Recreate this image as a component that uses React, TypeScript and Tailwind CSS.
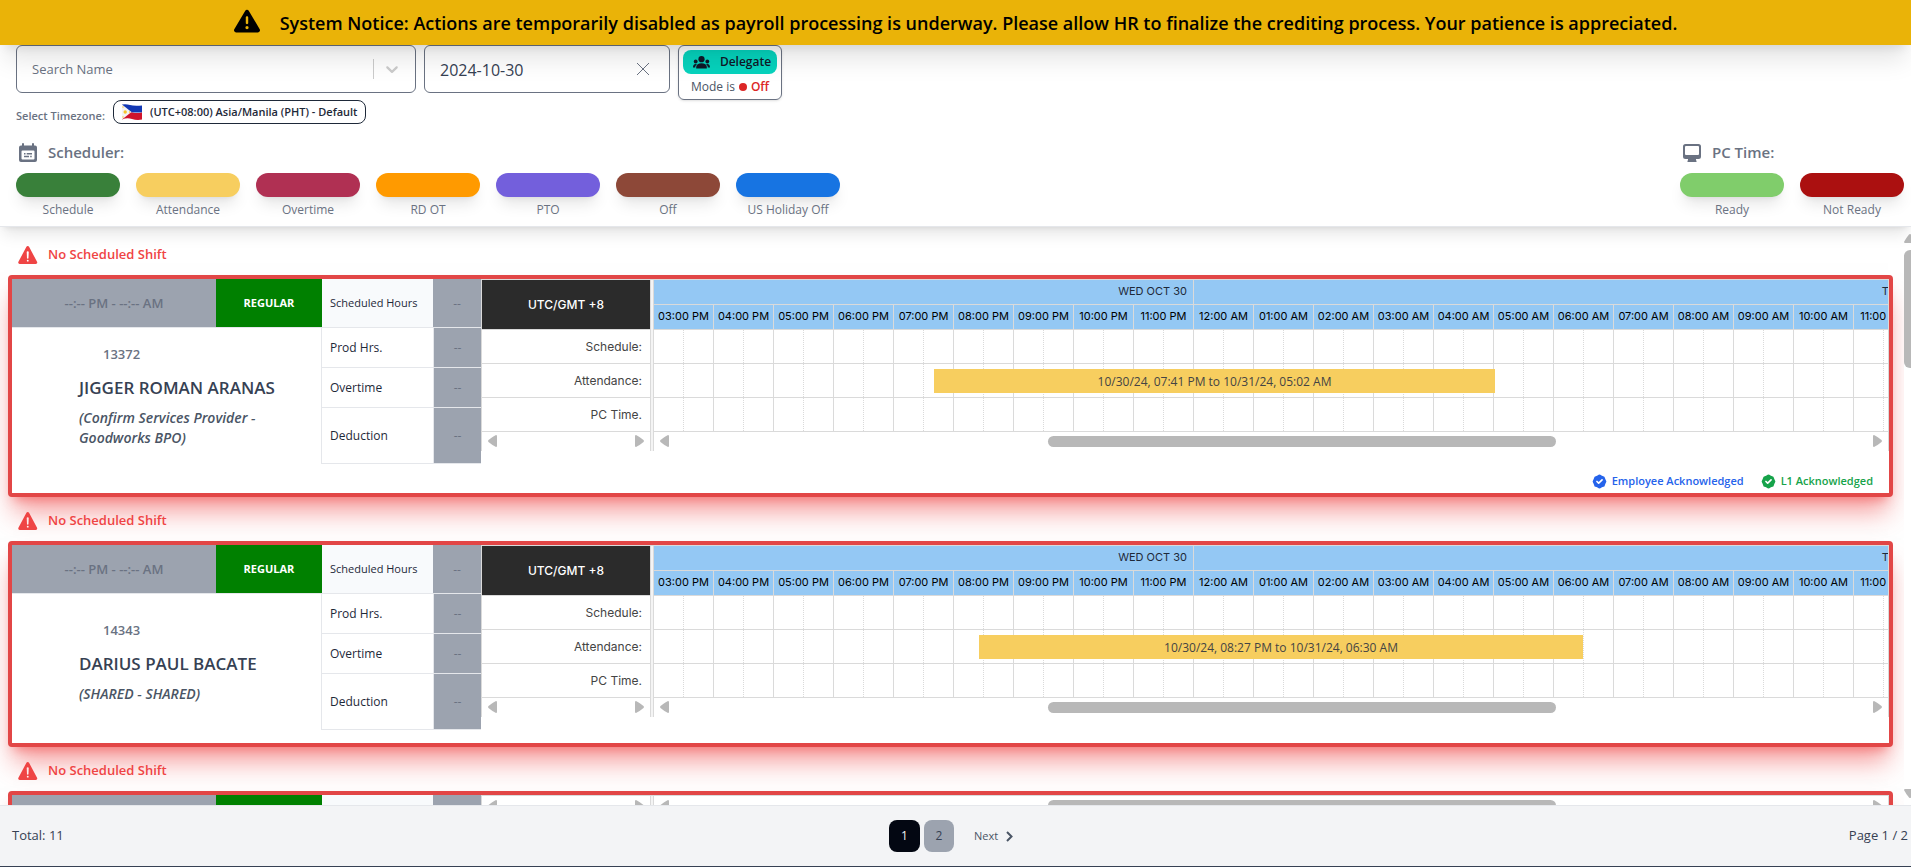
import { FaTriangleExclamation } from "react-icons/fa6";
import { IoWarning } from "react-icons/io5";
import { HiBadgeCheck } from "react-icons/hi";

type Legend = { label: string; color: string };

const schedulerLegend: Legend[] = [
  { label: "Schedule", color: "bg-[#39803a]" },
  { label: "Attendance", color: "bg-[#f7ce5f]" },
  { label: "Overtime", color: "bg-[#b03053]" },
  { label: "RD OT", color: "bg-[#ff9a00]" },
  { label: "PTO", color: "bg-[#735fdc]" },
  { label: "Off", color: "bg-[#8d4838]" },
  { label: "US Holiday Off", color: "bg-[#1774e2]" },
];

const pcLegend: Legend[] = [
  { label: "Ready", color: "bg-[#80cd6b]" },
  { label: "Not Ready", color: "bg-[#ab1010]" },
];

const hours = [
  "03:00 PM", "04:00 PM", "05:00 PM", "06:00 PM", "07:00 PM", "08:00 PM", "09:00 PM",
  "10:00 PM", "11:00 PM", "12:00 AM", "01:00 AM", "02:00 AM", "03:00 AM", "04:00 AM",
  "05:00 AM", "06:00 AM", "07:00 AM", "08:00 AM", "09:00 AM", "10:00 AM", "11:00 AM",
];

type Bar = { start: number; end: number; text: string };

type Employee = {
  id: string;
  name: string;
  account: string;
  attendance?: Bar;
  acknowledged?: boolean;
};

/* Bar times are minutes after 03:00 PM; the timeline draws one pixel per minute. */
const employees: Employee[] = [
  {
    id: "13372",
    name: "JIGGER ROMAN ARANAS",
    account: "(Confirm Services Provider - Goodworks BPO)",
    attendance: { start: 280, end: 841, text: "10/30/24, 07:41 PM to 10/31/24, 05:02 AM" },
    acknowledged: true,
  },
  {
    id: "14343",
    name: "DARIUS PAUL BACATE",
    account: "(SHARED - SHARED)",
    attendance: { start: 325, end: 929, text: "10/30/24, 08:27 PM to 10/31/24, 06:30 AM" },
  },
  { id: "", name: "", account: "" },
];

function CalendarIcon() {
  return (
    <svg viewBox="0 0 20 20" className="size-5" fill="none" aria-hidden="true">
      <path d="M5 1v3M15 1v3" stroke="currentColor" strokeWidth="2" strokeLinecap="round" />
      <path
        fillRule="evenodd"
        d="M3 2.500h14a2 2 0 0 1 2 2V17a2 2 0 0 1-2 2H3a2 2 0 0 1-2-2V4.500a2 2 0 0 1 2-2zM4.500 7.500a1 1 0 0 0-1 1V15.500a1 1 0 0 0 1 1h11a1 1 0 0 0 1-1V8.500a1 1 0 0 0-1-1z"
        fill="currentColor"
      />
      <path d="M6 10.700h1.500M8.700 10.700H14M6 13.500h5M12.200 13.500h1.500" stroke="currentColor" strokeWidth="1.400" />
    </svg>
  );
}

function MonitorIcon() {
  return (
    <svg viewBox="0 0 20 20" className="size-5" aria-hidden="true">
      <path
        fillRule="evenodd"
        d="M3.500 1h13A2.500 2.500 0 0 1 19 3.500v10a2.500 2.500 0 0 1-2.500 2.500H14v1.500h.5V19h-9v-1.500H6V16H3.500A2.500 2.500 0 0 1 1 13.500v-10A2.500 2.500 0 0 1 3.500 1zM4 3a1 1 0 0 0-1 1v7a1 1 0 0 0 1 1h12a1 1 0 0 0 1-1V4a1 1 0 0 0-1-1z"
        fill="currentColor"
      />
    </svg>
  );
}

function PeopleIcon() {
  return (
    <svg viewBox="0 0 17 13" className="h-[13px] w-[17px]" fill="currentColor" aria-hidden="true">
      <circle cx="8.500" cy="3.200" r="3.100" />
      <path d="M3.200 12.500v-1.600C3.200 8.600 5.200 7.200 8.500 7.200s5.300 1.400 5.300 3.700v1.600z" />
      <circle cx="2.700" cy="5.500" r="1.900" />
      <circle cx="14.300" cy="5.500" r="1.900" />
      <path d="M0 11.500c0-2.300.8-3.500 2.700-3.500.4 0 .8.100 1.200.2-1.100.8-1.700 1.900-1.700 3.300zM17 11.500c0-2.300-.8-3.500-2.700-3.500-.4 0-.8.100-1.200.2 1.100.8 1.700 1.900 1.700 3.300z" />
    </svg>
  );
}

function FlagIcon() {
  return (
    <svg viewBox="0 0 20 16" className="h-4 w-5" aria-hidden="true">
      <path d="M0 0.500Q4 -0.300 8 1T20 1.500V8.500H0z" fill="#1238b4" />
      <path d="M0 8Q5 7.500 10 8.500T20 8.500V15.500Q15 16.500 10 15T0 15.500z" fill="#d0142c" />
      <path d="M0 0.500 9.500 8 0 15.500z" fill="#f4f4f4" />
      <circle cx="3.200" cy="8" r="1.700" fill="#f6c52b" />
      <circle cx="1" cy="3" r="0.700" fill="#f6c52b" />
      <circle cx="1" cy="13" r="0.700" fill="#f6c52b" />
      <circle cx="7.600" cy="8" r="0.700" fill="#f6c52b" />
    </svg>
  );
}

function Arrow({ dir }: { dir: "left" | "right" | "up" | "down" }) {
  const paths = {
    left: "M10 1.2V11Q10 12 9 12 5 10 1.5 7 .5 6 1.5 5 5 2 9 0 10 0 10 1.2z",
    right: "M0 1.2V11Q0 12 1 12 5 10 8.5 7 9.500 6 8.500 5 5 2 1 0 0 0 0 1.2z",
    up: "M1.200 10H11Q12 10 12 9 10 5 7 1.500 6 .5 5 1.500 2 5 0 9 0 10 1.200 10z",
    down: "M1.200 0H11Q12 0 12 1 10 5 7 8.500 6 9.500 5 8.500 2 5 0 1 0 0 1.200 0z",
  };
  const flat = dir === "up" || dir === "down";
  return (
    <svg
      viewBox={flat ? "0 0 12 10" : "0 0 10 12"}
      className={flat ? "h-[10px] w-3 shrink-0" : "h-3 w-[10px] shrink-0"}
      fill="#b8b8b8"
      aria-hidden="true"
    >
      <path d={paths[dir]} />
    </svg>
  );
}

function LegendList({ items }: { items: Legend[] }) {
  return (
    <ul className="flex gap-4">
      {items.map((item) => (
        <li key={item.label} className="w-[104px] text-center">
          <div className={`h-6 rounded-full shadow-lg ${item.color}`} />
          <span className="block pt-1 text-xs leading-[18px] text-gray-500">{item.label}</span>
        </li>
      ))}
    </ul>
  );
}

function HoursRow({ label, tall }: { label: string; tall?: boolean }) {
  return (
    <tr className={tall ? "h-14" : "h-10"}>
      <th scope="row" className="border-b border-l border-gray-200 px-2 pt-[2px] text-left font-normal text-gray-800">
        {label}
      </th>
      <td className="border-b border-l border-gray-200 bg-[#9ca3af] pt-[2px] text-center text-gray-500">--</td>
    </tr>
  );
}

function Gantt({ bar }: { bar?: Bar }) {
  return (
    <div className="flex min-w-0 flex-1 self-start overflow-hidden border-x border-t border-[#dadada] font-['Inter',sans-serif]">
      <div className="w-[168px] shrink-0">
        {bar && (
          <>
            <div className="flex h-[49px] items-center justify-center bg-[#2b2b2b] pt-[2px] text-xs font-medium text-white">
              UTC/GMT +8
            </div>
            {["Schedule:", "Attendance:", "PC Time."].map((row) => (
              <div
                key={row}
                className="flex h-[34px] items-center justify-end border-t border-[#dadada] pt-[2px] pr-2 text-xs text-[#444]"
              >
                {row}
              </div>
            ))}
          </>
        )}
        <div className={`flex h-5 items-center justify-between px-[5px] ${bar ? "border-t border-[#dadada]" : ""}`}>
          <Arrow dir="left" />
          <Arrow dir="right" />
        </div>
      </div>
      <div className="w-1 shrink-0 border-x border-[#dadada] bg-[#f4f4f4]" />
      <div className="min-w-0 flex-1">
        {bar && (
          <div className="overflow-hidden">
            <div className="flex h-6 bg-[#94c8f4] text-[11px] text-gray-800">
              <div className="flex w-[540px] shrink-0 items-center justify-end border-r border-[#dadada] pr-[6px]">
                WED OCT 30
              </div>
              <div className="flex w-[1440px] shrink-0 items-center justify-center">THU OCT 31</div>
            </div>
            <div className="flex h-[25px] border-t border-[#dadada] bg-[#94c8f4] text-[11px] text-black">
              {hours.map((h) => (
                <div
                  key={h}
                  className="flex w-[60px] shrink-0 items-center justify-center border-r border-[#dadada] whitespace-nowrap"
                >
                  {h}
                </div>
              ))}
            </div>
            {[0, 1, 2].map((row) => (
              <div key={row} className="relative flex h-[34px] border-t border-[#dadada]">
                {hours.map((h) => (
                  <div key={h} className="flex w-[60px] shrink-0 border-r border-[#dadada]">
                    <div className="w-[30px] border-r border-dotted border-[#dadada]" />
                  </div>
                ))}
                {row === 1 && (
                  <div
                    className="absolute top-[5px] flex h-6 items-center justify-center bg-[#f7ce5f] pt-[2px] font-['Open_Sans',sans-serif] text-xs text-[#444]"
                    style={{ left: bar.start, width: bar.end - bar.start }}
                  >
                    {bar.text}
                  </div>
                )}
              </div>
            ))}
          </div>
        )}
        <div className={`flex h-5 items-center px-[5px] ${bar ? "border-t border-[#dadada]" : ""}`}>
          <Arrow dir="left" />
          <div className="flex-1">
            <div className="ml-[31.500%] h-[11px] w-[42.200%] rounded-full bg-[#b8b8b8]" />
          </div>
          <Arrow dir="right" />
        </div>
      </div>
    </div>
  );
}

function EmployeeCard({ employee }: { employee: Employee }) {
  return (
    <section>
      <h2 className="flex h-11 items-center gap-2 pt-1 pl-2 text-[13px] font-semibold text-[#ef4444]">
        <IoWarning className="size-6" aria-hidden="true" />
        No Scheduled Shift
      </h2>
      <div className="rounded border-4 border-[#e24646] bg-white shadow-[0_20px_25px_-5px_rgba(239,68,68,0.5),0_8px_10px_-6px_rgba(239,68,68,0.5)]">
        <div className="flex">
          <div className="w-[469px] shrink-0 text-xs">
            <div className="flex h-12">
              <div className="flex w-[204px] items-center justify-center bg-[#9ca3af] pt-[2px] text-[13px] font-semibold text-gray-500">
                --:-- PM - --:-- AM
              </div>
              <div className="flex w-[106px] items-center justify-center bg-[#008000] pt-[2px] text-[11px] font-bold text-white">
                REGULAR
              </div>
              <div className="flex w-[111px] items-center bg-slate-50 px-2 pt-[2px] text-[11px] whitespace-nowrap text-gray-800">
                Scheduled Hours
              </div>
              <div className="flex w-12 items-center justify-center bg-[#9ca3af] pt-[2px] text-gray-500">--</div>
            </div>
            <div className="flex border-t border-gray-200">
              <div className="flex w-[309px] flex-col justify-center pr-10 pb-[2px] pl-[67px] font-semibold">
                <p className="pl-6 text-[13px] leading-6 text-gray-500">{employee.id}</p>
                <p className="pt-2 text-[17px] leading-7 whitespace-nowrap text-gray-700">{employee.name}</p>
                <p className="pt-[6px] text-sm leading-5 text-gray-600 italic">{employee.account}</p>
              </div>
              <table className="w-40 table-fixed border-separate border-spacing-0">
                <colgroup>
                  <col className="w-[112px]" />
                  <col className="w-12" />
                </colgroup>
                <tbody>
                  <HoursRow label="Prod Hrs." />
                  <HoursRow label="Overtime" />
                  <HoursRow label="Deduction" tall />
                </tbody>
              </table>
            </div>
          </div>
          <Gantt bar={employee.attendance} />
        </div>
        {employee.acknowledged ? (
          <div className="flex h-[29px] items-center justify-end gap-4 pt-[7px] pr-4 text-[11px] font-semibold">
            <span className="flex items-center gap-1 text-[#2563eb]">
              <HiBadgeCheck className="size-[17px]" aria-hidden="true" />
              Employee Acknowledged
            </span>
            <span className="flex items-center gap-1 text-[#16a34a]">
              <HiBadgeCheck className="size-[17px]" aria-hidden="true" />
              L1 Acknowledged
            </span>
          </div>
        ) : (
          <div className="h-[13px]" />
        )}
      </div>
    </section>
  );
}

export default function App() {
  return (
    <div className="flex h-screen flex-col overflow-hidden bg-white font-['Open_Sans','Noto_Sans',sans-serif]">
      <div
        role="alert"
        className="relative z-20 flex h-[45px] shrink-0 items-center justify-center gap-5 bg-[#eab308] text-lg font-semibold text-black shadow-xl"
      >
        <FaTriangleExclamation className="mb-1 size-[26px]" aria-hidden="true" />
        System Notice: Actions are temporarily disabled as payroll processing is underway. Please allow HR to
        finalize the crediting process. Your patience is appreciated.
      </div>

      <header className="relative z-10 shrink-0 border-b border-gray-200 bg-white pr-[7px] pb-[7px] pl-4 shadow-lg">
        <div className="flex items-start gap-2">
          <div className="flex h-12 w-[400px] items-center rounded-md border border-gray-500 pr-[13px] pl-[15px]">
            <input
              type="text"
              aria-label="Search Name"
              placeholder="Search Name"
              className="min-w-0 flex-1 pt-[2px] text-[13px] outline-none placeholder:text-gray-500"
            />
            <span className="h-5 w-px bg-[#ccc]" />
            <svg viewBox="0 0 20 20" className="ml-2 size-5 text-[#ccc]" fill="currentColor" aria-hidden="true">
              <path d="M4.516 7.548c.436-.446 1.043-.481 1.576 0L10 11.295l3.908-3.747c.533-.481 1.141-.446 1.574 0 .436.445.408 1.197 0 1.615l-4.695 4.502c-.217.223-.502.335-.787.335s-.57-.112-.789-.335L4.516 9.163c-.408-.418-.436-1.170 0-1.615z" />
            </svg>
          </div>
          <div className="flex h-12 w-[246px] items-center rounded-md border border-gray-500 pr-5 pl-[15px]">
            <input
              type="text"
              aria-label="Date"
              defaultValue="2024-10-30"
              className="min-w-0 flex-1 pt-[2px] text-base text-gray-700 outline-none"
            />
            <button type="button" aria-label="Clear date" className="text-gray-500">
              <svg viewBox="0 0 12 12" className="size-3" stroke="currentColor" aria-hidden="true">
                <path d="M0 0l12 12M12 0L0 12" />
              </svg>
            </button>
          </div>
          <div className="h-[55px] w-[104px] rounded-md border border-gray-500 p-1 text-xs shadow-sm">
            <button
              type="button"
              className="flex h-6 w-full items-center justify-center gap-[10px] rounded-lg bg-[#06d3bd] pl-1 font-semibold text-gray-900"
            >
              <PeopleIcon />
              Delegate
            </button>
            <p className="flex items-center justify-center gap-1 pt-[5px] text-gray-600">
              Mode is
              <span className="size-2 rounded-full bg-[#dc2626]" />
              <span className="font-semibold text-[#dc2626]">Off</span>
            </p>
          </div>
        </div>

        <div className="flex items-center gap-2">
          <span id="tz-label" className="pt-2 text-[11px] font-semibold text-gray-500">
            Select Timezone:
          </span>
          <button
            type="button"
            aria-describedby="tz-label"
            className="flex h-6 items-center gap-2 rounded-lg border border-gray-800 px-2 text-[11px] font-semibold text-gray-800"
          >
            <FlagIcon />
            (UTC+08:00) Asia/Manila (PHT) - Default
          </button>
        </div>

        <div className="flex justify-between pt-4">
          <div>
            <h1 className="flex h-6 items-center gap-[10px] pl-[2px] text-[15px] font-semibold text-gray-500">
              <CalendarIcon />
              Scheduler:
            </h1>
            <div className="pt-2">
              <LegendList items={schedulerLegend} />
            </div>
          </div>
          <div>
            <h1 className="flex h-6 items-center gap-[10px] pl-[2px] text-[15px] font-semibold text-gray-500">
              <MonitorIcon />
              PC Time:
            </h1>
            <div className="pt-2">
              <LegendList items={pcLegend} />
            </div>
          </div>
        </div>
      </header>

      <div className="flex min-h-0 flex-1">
        <main className="min-w-0 flex-1 overflow-hidden pt-1 pr-[11px] pl-2">
          {employees.map((employee, i) => (
            <EmployeeCard key={i} employee={employee} />
          ))}
        </main>
        <div className="flex w-[7px] shrink-0 flex-col overflow-hidden pt-[6px] pb-[6px]">
          <Arrow dir="up" />
          <div className="mt-[7px] h-[118px] w-3 rounded-full bg-[#b8b8b8]" />
          <div className="flex-1" />
          <Arrow dir="down" />
        </div>
      </div>

      <footer className="relative z-10 grid h-[62px] shrink-0 grid-cols-3 items-center border-t border-b border-t-gray-200 border-b-gray-700 bg-gray-100 pr-[3px] pl-3 text-[13px] text-gray-700">
        <span>Total: 11</span>
        <nav aria-label="Pagination" className="flex items-center justify-center pr-[18px] text-xs">
          <button type="button" aria-current="page" className="h-8 w-[31px] rounded-lg bg-[#030712] text-gray-100">
            1
          </button>
          <button type="button" className="ml-1 h-8 w-[30px] rounded-lg bg-[#9ca3af] text-gray-700">
            2
          </button>
          <button type="button" className="ml-5 flex items-center gap-2 text-[11px] text-gray-600">
            Next
            <svg viewBox="0 0 7 11" className="h-[11px] w-[7px]" fill="none" aria-hidden="true">
              <path d="M1 1l4.500 4.500L1 10" stroke="currentColor" strokeWidth="2" />
            </svg>
          </button>
        </nav>
        <span className="text-right">Page 1 / 2</span>
      </footer>
    </div>
  );
}
